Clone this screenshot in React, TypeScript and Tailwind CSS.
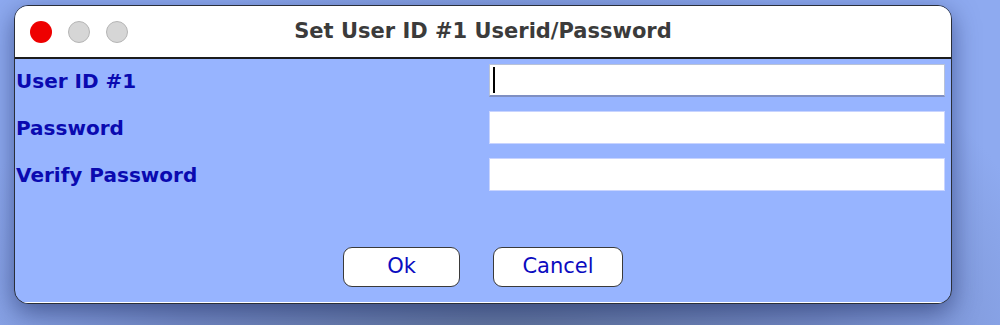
import React from "react";

export default function App() {
  const font = { fontFamily: '"DejaVu Sans", "Liberation Sans", sans-serif' };
  return (
    <div
      className="w-[1000px] h-[325px] overflow-hidden bg-[radial-gradient(ellipse_at_50%_110%,#5f7299_0%,#7389c4_45%,#8eaaf0_80%)] pl-[14px] pt-[5px]"
      style={font}
    >
      <div className="w-[938px] h-[299px] rounded-[14px] border border-[#2a2f3a] bg-[#97b4ff] overflow-hidden flex flex-col shadow-[0_8px_26px_rgba(30,45,100,0.6)]">
        <div className="h-[53px] bg-white border-b-2 border-[#1c1c1c] flex items-center relative shrink-0">
          <div className="flex items-center gap-[16px] pl-[15px]">
            <div className="w-[22px] h-[22px] rounded-full bg-[#ee0000]" />
            <div className="w-[22px] h-[22px] rounded-full bg-[#d6d6d6] border border-[#b5b5b5]" />
            <div className="w-[22px] h-[22px] rounded-full bg-[#d6d6d6] border border-[#b5b5b5]" />
          </div>
          <div className="absolute left-0 right-0 top-0 bottom-0 flex items-center justify-center pointer-events-none">
            <span className="text-[21px] font-bold text-[#3b3b3b]">Set User ID #1 Userid/Password</span>
          </div>
        </div>
        <div className="flex-1 flex flex-col border-b border-white">
          <div className="grid grid-cols-[473px_1fr] gap-y-[14px] pt-[5px] pr-[6px] pl-[1px]">
            <div className="flex items-center h-[33px] text-[20px] font-bold text-[#0a0ab0]">User ID #1</div>
            <div className="h-[33px] bg-white border border-[#b8c2d8] border-b-[#7f8fc2] border-b-2 relative">
              <div className="absolute left-[3px] top-[2px] w-[2px] h-[26px] bg-black" />
            </div>
            <div className="flex items-center h-[33px] text-[20px] font-bold text-[#0a0ab0]">Password</div>
            <div className="h-[33px] bg-white border border-[#c8d4ff]" />
            <div className="flex items-center h-[33px] text-[20px] font-bold text-[#0a0ab0]">Verify Password</div>
            <div className="h-[33px] bg-white border border-[#c8d4ff]" />
          </div>
          <div className="flex justify-center gap-[33px] mt-[56px]">
            <button className="w-[117px] h-[40px] rounded-[9px] bg-white border border-[#3a3a3a] text-[21px] text-[#0b0bbf]">Ok</button>
            <button className="w-[130px] h-[40px] rounded-[9px] bg-white border border-[#3a3a3a] text-[21px] text-[#0b0bbf]">Cancel</button>
          </div>
        </div>
      </div>
    </div>
  );
}
